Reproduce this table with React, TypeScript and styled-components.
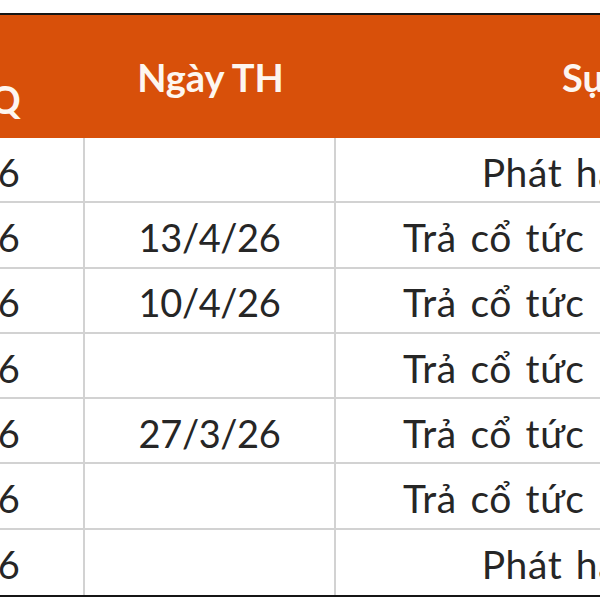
import styled, { createGlobalStyle } from 'styled-components';

const GlobalStyle = createGlobalStyle`
  html, body {
    margin: 0;
    padding: 0;
    background: #ffffff;
    overflow: hidden;
  }
`;

const headerOrange = '#d8500a';
const gridGray = '#d2d2d2';
const columns = '271px 251px 577px';

type RowType = {
  gdkhq: string;
  ngayTH: string;
  suKien: string;
};

const rows: RowType[] = [
  { gdkhq: '20/4/26', ngayTH: '', suKien: 'Phát hành thêm' },
  { gdkhq: '30/3/26', ngayTH: '13/4/26', suKien: 'Trả cổ tức bằng tiền mặt' },
  { gdkhq: '27/3/26', ngayTH: '10/4/26', suKien: 'Trả cổ tức bằng tiền mặt' },
  { gdkhq: '26/3/26', ngayTH: '', suKien: 'Trả cổ tức bằng tiền mặt' },
  { gdkhq: '16/3/26', ngayTH: '27/3/26', suKien: 'Trả cổ tức bằng tiền mặt' },
  { gdkhq: '12/3/26', ngayTH: '', suKien: 'Trả cổ tức bằng tiền mặt' },
  { gdkhq: '10/3/26', ngayTH: '', suKien: 'Phát hành thêm' },
];

const Frame = styled.div`
  width: 600px;
  height: 600px;
  overflow: hidden;
  padding-top: 13px;
  box-sizing: border-box;
  font-family: 'Lato', 'Noto Sans', sans-serif;
`;

const Table = styled.div`
  width: 1099px;
  margin-left: -186px;
  border-top: 2px solid #151515;
  border-bottom: 2px solid #151515;
`;

const HeaderRow = styled.div`
  display: grid;
  grid-template-columns: ${columns};
  height: 123px;
  background-color: ${headerOrange};
`;

const HeaderCell = styled.div`
  display: flex;
  align-items: center;
  justify-content: center;
  text-align: center;
  color: #fdf6f0;
  font-weight: 700;
  font-size: 38px;
  line-height: 44px;
  white-space: nowrap;
`;

const BodyRow = styled.div<{ $last?: boolean }>`
  display: grid;
  grid-template-columns: ${columns};
  height: 65.3px;
  box-sizing: border-box;
  border-bottom: ${(p) => (p.$last ? 'none' : `2px solid ${gridGray}`)};
`;

const BodyCell = styled.div<{ $divider?: boolean; $wide?: boolean }>`
  display: flex;
  align-items: center;
  justify-content: center;
  padding-top: 4px;
  color: #262626;
  font-size: ${(p) => (p.$wide ? '39px' : '38px')};
  letter-spacing: ${(p) => (p.$wide ? '0.6px' : '-0.4px')};
  word-spacing: ${(p) => (p.$wide ? '3px' : '0')};
  white-space: nowrap;
  border-right: ${(p) => (p.$divider ? `2px solid ${gridGray}` : 'none')};
`;

export default function App() {
  return (
    <>
      <GlobalStyle />
      <Frame>
        <Table>
          <HeaderRow>
            <HeaderCell>
              Ngày
              <br />
              GDKHQ
            </HeaderCell>
            <HeaderCell>Ngày TH</HeaderCell>
            <HeaderCell>Sự kiện</HeaderCell>
          </HeaderRow>
          {rows.map((row, i) => (
            <BodyRow key={i} $last={i === rows.length - 1}>
              <BodyCell $divider>{row.gdkhq}</BodyCell>
              <BodyCell $divider>{row.ngayTH}</BodyCell>
              <BodyCell $wide>{row.suKien}</BodyCell>
            </BodyRow>
          ))}
        </Table>
      </Frame>
    </>
  );
}
